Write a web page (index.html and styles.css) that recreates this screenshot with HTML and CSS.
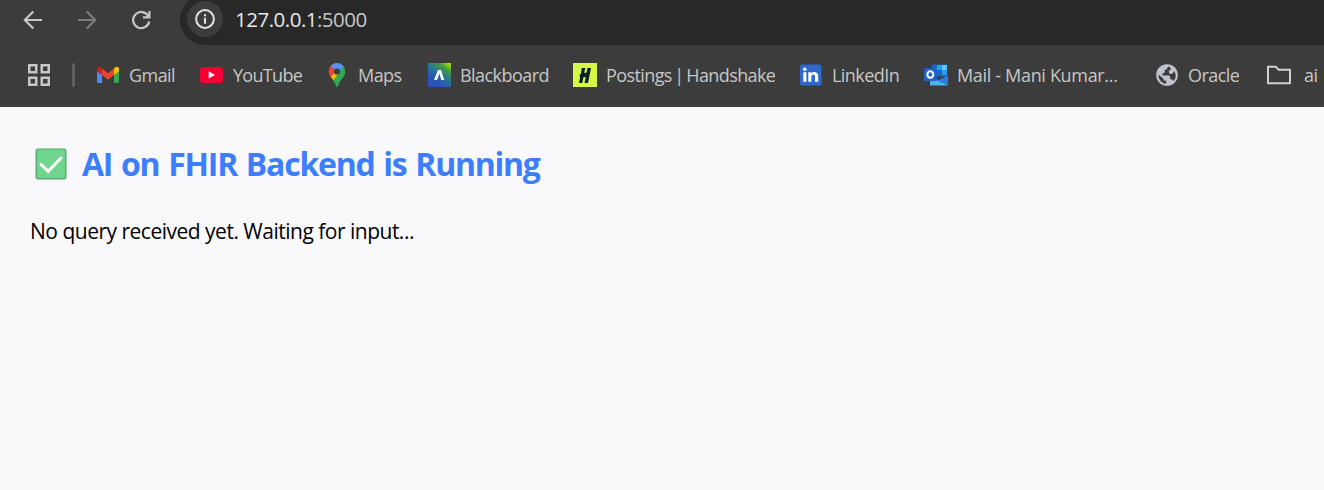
FILE: index.html
```html
<!DOCTYPE html>
<html lang="en">
<head>
<meta charset="utf-8">
<title>AI on FHIR Backend</title>
<link rel="stylesheet" href="styles.css">
</head>
<body>
<header class="browser">
  <div class="toolbar">
    <nav class="nav">
      <svg width="24" height="24" viewBox="0 0 24 24" class="stroke"><path d="M21 12H4M12.300 3.500L3.800 12l8.500 8.500"/></svg>
      <svg width="24" height="24" viewBox="0 0 24 24" class="stroke dim"><path d="M3 12h17M11.700 3.500l8.500 8.500-8.500 8.500"/></svg>
      <svg width="24" height="24" viewBox="0 0 24 24" class="stroke"><path d="M19.500 8.500A8.100 8.100 0 1 0 20.200 13.500M20.400 3v6.400H14"/></svg>
    </nav>
    <div class="address">
      <span class="info"><svg width="22" height="22" viewBox="0 0 22 22"><circle cx="11" cy="11" r="8.900" fill="none" stroke="#e3e3e3" stroke-width="2"/><path d="M10 9.800h2v6h-2zM10 6.200h2v2h-2z" fill="#e3e3e3"/></svg></span>
      <span class="url">127.0.0.1<span class="port">:5000</span></span>
    </div>
  </div>
  <div class="bookmarks">
    <svg class="apps" width="22" height="22" viewBox="0 0 22 22"><path d="M1.250 1.250h7v7h-7zM13.750 1.250h7v7h-7zM1.250 13.750h7v7h-7zM13.750 13.750h7v7h-7z" fill="none" stroke="#c7c7c7" stroke-width="2.500"/></svg>
    <span class="divider"></span>
    <div class="links">
      <a class="link gmail"><svg width="24" height="24" viewBox="0 0 24 24"><path d="M1 7v11.500c0 .8.600 1.500 1.500 1.500H6V10z" fill="#4c8bf5"/><path d="M23 7v11.500c0 .8-.6 1.500-1.500 1.500H18V10z" fill="#34a853"/><path d="M18 5.500V12l5-3.800V6c0-2-2.300-2.800-3.900-1.500z" fill="#fbbc04"/><path d="M6 5.500l6 4.700 6-4.700V12l-6 4.700L6 12z" fill="#ea4335"/><path d="M6 5.500V12L1 8.200V6c0-2 2.300-2.800 3.900-1.500z" fill="#c5221f"/></svg><span>Gmail</span></a>
      <a class="link youtube"><svg width="24" height="24" viewBox="0 0 24 24"><rect y="4" width="23" height="16" rx="3" fill="#f50032"/><path d="M8.700 8.200v7.400l6.300-3.700z" fill="#fff"/></svg><span>YouTube</span></a>
      <a class="link maps"><svg width="24" height="24" viewBox="0 0 24 24"><defs><clipPath id="pin"><path d="M12 .2a8.200 8.200 0 0 0-8.200 8.300c0 4.900 4.600 7 6.500 12.200.7 1.800.7 3 1.700 3s1-1.200 1.700-3c1.900-5.200 6.500-7.300 6.500-12.200A8.200 8.200 0 0 0 12 .2z"/></clipPath></defs><g clip-path="url(#pin)"><path d="M0 0h24v24H0z" fill="#34a853"/><path d="M4 0h16l-1 4-7 8-6-8z" fill="#4285f4"/><path d="M0 2l5.600.8L12 8.500 5 16H0z" fill="#ea4335"/><path d="M4 15l8-7 3 3-7 8z" fill="#fbbc04"/><path d="M18.500 3L8 18l4 6 12-8V3z" fill="#34a853"/><path d="M6 0h12l1 3-7 6-6-6z" fill="#5b91f5"/></g><circle cx="12" cy="8.500" r="3.100" fill="#3c3c3c"/></svg><span>Maps</span></a>
      <a class="link blackboard"><svg width="24" height="24" viewBox="0 0 24 24"><defs><linearGradient id="bb" x1="1" y1="0" x2=".4" y2=".85"><stop stop-color="#b8f000"/><stop offset=".3" stop-color="#439c3d"/><stop offset=".65" stop-color="#27709a"/><stop offset="1" stop-color="#2854b9"/></linearGradient></defs><path d="M1 0h23v24H1z" fill="url(#bb)"/><path d="M7 17l4-10h3l3.300 10h-3l-1.900-6.500L10 17z" fill="#fff"/></svg><span>Blackboard</span></a>
      <a class="link handshake"><svg width="24" height="24" viewBox="0 0 24 24"><path d="M0 0h24v24H0z" fill="#d5f944"/><path d="M8.800 5h3.400l-1 5.200 2.400-.8.900-4.400H18l-3 15h-3.500l1.300-6.300-2.500.9-1 5.400H6l1.100-5.600-.6-2.400 1.300-1z" fill="#071f25"/></svg><span>Postings | Handshake</span></a>
      <a class="link linkedin"><svg width="24" height="24" viewBox="0 0 24 24"><rect x="1" y="1.500" width="21.500" height="21" rx="2" fill="#2f68cd"/><circle cx="5.800" cy="6.300" r="1.800" fill="#fff"/><path d="M4.300 9.200h3.100v9.500H4.300zM9.300 9.200h3v1.300c1.900-2.400 6.900-2 6.900 2.700v5.500H16v-5c0-3-3.600-2.800-3.600 0v5H9.300z" fill="#fff"/></svg><span>LinkedIn</span></a>
      <a class="link mail"><svg width="24" height="24" viewBox="0 0 24 24"><path d="M8 1.500h15v12H8z" fill="#176bc1"/><path d="M13 2h5v5h-5z" fill="#2ba0e8"/><path d="M18 2h5v5h-5z" fill="#55c8f5"/><path d="M13 7h5v5h-5z" fill="#136bbd"/><path d="M18 7h5v5h-5z" fill="#3199e5"/><path d="M6 13l9 4 9-5v10H6z" fill="#2c7edb"/><path d="M6 14l18 8.500H6z" fill="#48b4ee"/><rect y="5" width="13" height="13" rx="1" fill="#2162c8"/><ellipse cx="6.300" cy="11.500" rx="3" ry="3.300" fill="none" stroke="#fff" stroke-width="2"/></svg><span>Mail - Mani Kumar...</span></a>
      <a class="link oracle"><svg width="24" height="24" viewBox="0 0 24 24"><circle cx="12" cy="12" r="10.800" fill="#c1c5cb"/><path d="M13.800 3.400c-1.300.6-1.900 1.700-1.900 3.100H9.700v2.200c0 1-.8 1.600-2.200 1.500v2.300h6c1 0 1.600.6 1.600 1.600v2.200c1.800-.1 3 .4 3.500 1.700 2.900-3 2.600-7.500.4-9.800-.5 1.600-1.600 2.600-3.100 2.700-1.300-.1-2-1-2-2.200V7.500c1.500-.3 2.100-1.300 1.900-2.300z" fill="#3c3c3c"/><path d="M3.500 11.500l5 4.300v1.800h2.600v3.100c-4.400-.4-8-4.300-7.600-9.200z" fill="#3c3c3c"/></svg><span>Oracle</span></a>
      <a class="link ai"><svg width="24" height="24" viewBox="0 0 24 24"><path d="M1 3.800h8l2.500 2.900H23v13.500H1z" fill="none" stroke="#d0d0d0" stroke-width="2" stroke-linejoin="round"/></svg><span>ai</span></a>
    </div>
  </div>
</header>
<main class="page">
  <h1 class="title"><svg class="check" width="32" height="32" viewBox="0 0 32 32"><rect x=".5" y=".5" width="31" height="31" rx="2.500" fill="#54af71"/><rect x="2" y="1.500" width="28" height="28.500" rx="1.500" fill="#70d58d"/><path d="M6 16.300l7.200 7L26 10" fill="none" stroke="#fff" stroke-width="3" stroke-linecap="round"/></svg><span>AI on FHIR Backend is Running</span></h1>
  <p class="status">No query received yet. Waiting for input...</p>
</main>
</body>
</html>
```
FILE: styles.css
```css
* { box-sizing: border-box; }
body { margin: 0; height: 490px; overflow: hidden; background: #f9f9fc; font-family: "Open Sans", "Noto Sans", sans-serif; }
svg { display: block; flex: none; }
.browser { height: 107px; background: #3c3c3c; border-bottom: 1px solid #333; overflow: hidden; }
.toolbar { display: flex; height: 45px; padding-left: 21px; }
.nav { display: flex; gap: 30px; width: 159px; padding-top: 8px; }
.stroke { fill: none; stroke: #c7c7c7; stroke-width: 2.2; }
.dim { stroke: #7c7c7c; }
.address { display: flex; flex: 1; height: 50px; margin-top: -5px; padding: 6px 0 0 7px; background: #282828; border-radius: 25px 0 0 25px; }
.info { display: flex; align-items: center; justify-content: center; width: 36px; height: 36px; border-radius: 50%; background: #3c3c3c; }
.url { margin-left: 12px; font-size: 20.500px; line-height: 37px; color: #e8e8e8; white-space: nowrap; letter-spacing: -.5px; }
.port { color: #c7c7c7; }
.bookmarks { display: flex; align-items: center; height: 61px; padding-left: 28px; border-bottom: 1px solid #484848; }
.divider { width: 3px; height: 24px; margin: 0 21px 0 22px; border-radius: 2px; background: #606060; }
.links { display: grid; grid-template-columns: 104px 125px 102px 146px 226px 125px 231px 112px 57px; }
.link { display: flex; align-items: center; gap: 9px; color: #c7c7c7; font-size: 18px; line-height: 26px; letter-spacing: -.55px; white-space: nowrap; }
.link span { margin-top: -1px; }
.youtube { letter-spacing: -.7px; }
.handshake { letter-spacing: -.6px; word-spacing: -1.5px; }
.mail { letter-spacing: -.33px; }
.ai { gap: 13px; }
.page { display: flex; flex-direction: column; padding: 32px 30px; }
.title { display: flex; align-items: center; gap: 15px; height: 50px; margin: 0; padding-left: 5px; color: #3d7eff; font-size: 32px; line-height: 50px; font-weight: 700; white-space: nowrap; letter-spacing: -1.25px; word-spacing: 1.8px; }
.status { margin: 27px 0 0; color: #000; font-size: 21px; line-height: 30px; white-space: nowrap; letter-spacing: -.5px; }
```
